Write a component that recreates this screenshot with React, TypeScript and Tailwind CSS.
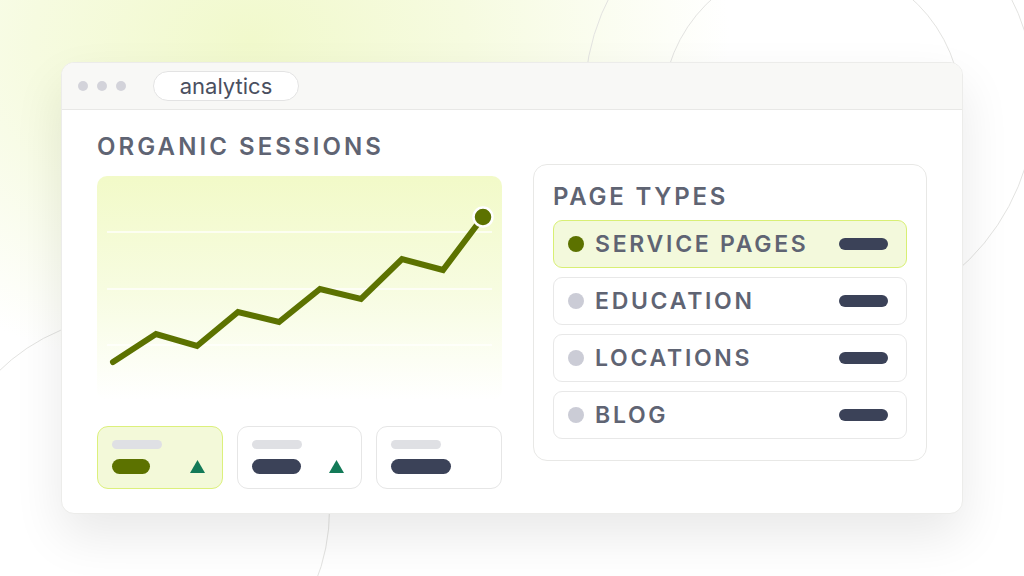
import React from "react";

const pts: [number, number][] = [
  [16, 186], [59, 158], [100, 170], [141, 136], [182, 146],
  [223, 113], [264, 123], [305, 83], [346, 94], [386, 41],
];

function Chart() {
  const d = pts.map((p, i) => `${i === 0 ? "M" : "L"}${p[0]} ${p[1]}`).join(" ");
  return (
    <div className="h-[224px] w-full rounded-[10px] bg-gradient-to-b from-[#f2fac8] via-[#f7fce0] to-[#ffffff]">
      <svg width="405" height="224" viewBox="0 0 405 224" className="block">
        {[56, 113, 169].map((y) => (
          <line key={y} x1="10" x2="395" y1={y} y2={y} stroke="#ffffff" strokeWidth="1.5" strokeOpacity="0.9" />
        ))}
        <path d={d} fill="none" stroke="#5c7200" strokeWidth="6" strokeLinecap="round" strokeLinejoin="miter" />
        <circle cx="386" cy="41" r="9.5" fill="#5c7200" stroke="#ffffff" strokeWidth="2.5" />
      </svg>
    </div>
  );
}

function Tri() {
  return (
    <svg width="15" height="13" viewBox="0 0 15 13">
      <polygon points="7.5,0 15,13 0,13" fill="#137a58" />
    </svg>
  );
}

function StatCard({ active, pillW, tri }: { active?: boolean; pillW: number; tri: boolean }) {
  return (
    <div
      className={
        "flex h-[63px] flex-col justify-start rounded-[11px] border pl-[14px] pr-[17px] pt-[13px] " +
        (active ? "border-[#dcf07c] bg-[#f3f9d9]" : "border-[#e6e6e6] bg-white")
      }
    >
      <div className="h-[9px] w-[50px] rounded-full bg-[#dfe0e4]" />
      <div className="mt-[10px] flex items-center justify-between">
        <div
          className={"h-[15px] rounded-full " + (active ? "bg-[#5c7200]" : "bg-[#3b4258]")}
          style={{ width: pillW }}
        />
        {tri ? <Tri /> : null}
      </div>
    </div>
  );
}

function Row({ label, active }: { label: string; active?: boolean }) {
  return (
    <div
      className={
        "flex h-[48px] items-center rounded-[9px] border pl-[14px] pr-[18px] " +
        (active ? "border-[#d8ef74] bg-[#f3f9dc]" : "border-[#e8e8e8] bg-white")
      }
    >
      <div className={"h-[16px] w-[16px] rounded-full " + (active ? "bg-[#5c7200]" : "bg-[#cbccd6]")} />
      <div className="ml-[11px] flex-1 text-[23px] font-semibold leading-none tracking-[0.118em] text-[#5f6473]">
        {label}
      </div>
      <div className="h-[12px] w-[49px] rounded-full bg-[#3b4258]" />
    </div>
  );
}

export default function App() {
  return (
    <div
      className="relative h-[576px] w-[1024px] overflow-hidden bg-white"
      style={{ fontFamily: "Inter, 'Noto Sans', sans-serif" }}
    >
      {/* background glow */}
      <div className="absolute inset-0 bg-[radial-gradient(ellipse_480px_340px_at_250px_40px,#f1f9cc_0%,#f6fbe0_45%,rgba(255,255,255,0)_100%)]" />
      {/* decorative circles */}
      <div className="absolute left-[584px] top-[-126px] h-[452px] w-[452px] rounded-full border-[1.5px] border-[#e3e3e1]" />
      <div className="absolute left-[662px] top-[-40px] h-[300px] w-[300px] rounded-full border-[1.5px] border-[#e3e3e1]" />
      <div className="absolute left-[-60px] top-[315px] h-[390px] w-[390px] rounded-full border-[1.5px] border-[#e3e3e1]" />

      {/* window */}
      <div className="absolute left-[61px] top-[62px] flex h-[452px] w-[902px] flex-col overflow-hidden rounded-[13px] border border-[#ececea] bg-white shadow-[0_22px_50px_rgba(0,0,0,0.09)]">
        <div className="flex h-[47px] items-center border-b border-[#e8e8e6] bg-[#f8f8f6] pl-[16px]">
          <div className="flex gap-[9px]">
            <div className="h-[10px] w-[10px] rounded-full bg-[#d3d3da]" />
            <div className="h-[10px] w-[10px] rounded-full bg-[#d3d3da]" />
            <div className="h-[10px] w-[10px] rounded-full bg-[#d3d3da]" />
          </div>
          <div className="ml-[27px] flex h-[30px] w-[146px] items-center justify-center rounded-full border border-[#e3e3e3] bg-white text-[22px] leading-none text-[#4a4f60]">
            analytics
          </div>
        </div>
        <div className="flex flex-1 gap-[31px] pl-[35px] pr-[35px]">
          <div className="flex w-[405px] flex-col pt-[22px]">
            <div className="h-[30px] text-[24px] font-semibold leading-[30px] tracking-[0.128em] text-[#5f6473]">
              ORGANIC SESSIONS
            </div>
            <div className="mt-[14px]">
              <Chart />
            </div>
            <div className="mt-[26px] grid grid-cols-3 gap-[14px]">
              <StatCard active pillW={38} tri />
              <StatCard pillW={49} tri />
              <StatCard pillW={60} tri={false} />
            </div>
          </div>
          <div className="mt-[54px] flex h-[297px] flex-1 flex-col rounded-[14px] border border-[#e8e8e6] bg-white px-[19px] pt-[17px]">
            <div className="h-[30px] text-[24px] font-semibold leading-[30px] tracking-[0.115em] text-[#5f6473]">
              PAGE TYPES
            </div>
            <div className="mt-[8px] flex flex-col gap-[9px]">
              <Row label="SERVICE PAGES" active />
              <Row label="EDUCATION" />
              <Row label="LOCATIONS" />
              <Row label="BLOG" />
            </div>
          </div>
        </div>
      </div>
    </div>
  );
}
